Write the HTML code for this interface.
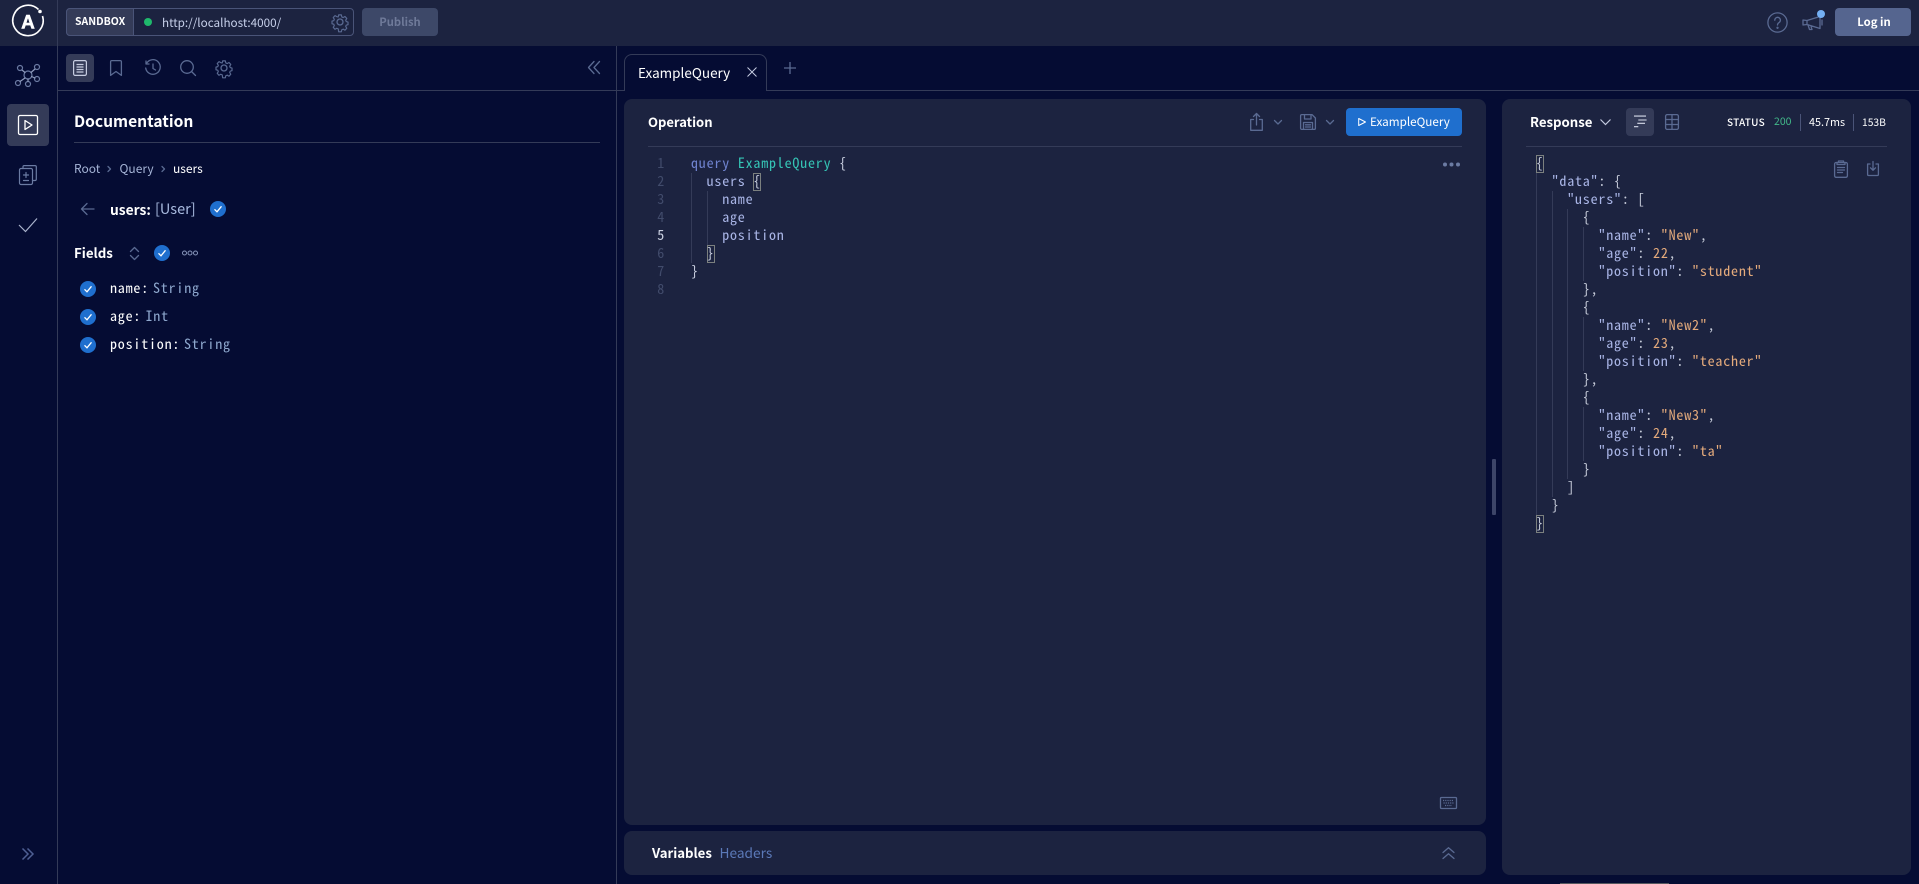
<!DOCTYPE html>
<html><head><meta charset="utf-8"><title>Apollo Sandbox</title>
<style>
*{box-sizing:border-box;margin:0;padding:0}
html,body{width:1919px;height:884px;overflow:hidden;background:#050c33}
body{position:relative;font-family:"Noto Sans CJK JP","Liberation Sans",sans-serif;color:#fff}
.a{position:absolute}
.t{position:absolute;white-space:nowrap;line-height:20px;height:20px}
.m{font-family:"Noto Sans Mono CJK JP","Liberation Mono","DejaVu Sans Mono",monospace;font-size:14px;letter-spacing:.8px;line-height:18px;height:18px;white-space:pre;position:absolute;margin-top:-1px}
svg{position:absolute;overflow:visible;fill:none}
.ln{color:#414b6b;width:20px;text-align:right}
.p{color:#a9b5e6}.k{color:#6f83cf}.c{color:#35c4b5}.w{color:#c9cfe0}.s{color:#e5ab7c}.g{color:#c6cbd9}
.gd{position:absolute;width:1px;background:#343b58}
.bm{position:absolute;width:8px;height:18px;border:1px solid #7b807f}
.chk circle{fill:#1f6fce}.chk path{stroke:#fff;stroke-width:1.3}
.ic{stroke:#5a6a92;stroke-width:1.3;stroke-linecap:round;stroke-linejoin:round}
.ib{stroke:#6b7ba3;stroke-width:1.2;stroke-linecap:round;stroke-linejoin:round}
</style></head><body>
<!-- top bar -->
<div class="a" style="left:0;top:0;width:1919px;height:46px;background:#1c2340"></div>
<div class="a" style="left:57px;top:0;width:1px;height:884px;background:#343b58"></div>
<div class="a" style="left:616px;top:46px;width:1px;height:838px;background:#343b58"></div>
<svg style="left:0;top:0" width="56" height="46"><path d="M38.5 9.5A15.2 15.2 0 1 0 42.5 16" stroke="#fff" stroke-width="1.6"/><circle cx="40" cy="11.5" r="1.8" fill="#fff"/><text x="28" y="28.5" text-anchor="middle" font-family="Liberation Sans,sans-serif" font-size="19" font-weight="700" fill="#fff" stroke="#fff" stroke-width=".5">A</text></svg>
<div class="a" style="left:66px;top:8px;width:288px;height:28px;border:1px solid #4a5478;border-radius:4px"></div>
<div class="a" style="left:66px;top:8px;width:68px;height:28px;background:#343b58;border:1px solid #4a5478;border-radius:4px 0 0 4px"></div>
<div class="t" style="left:75px;top:12px;font-size:10.5px;font-weight:700">SANDBOX</div>
<div class="a" style="left:144px;top:18px;width:8px;height:8px;border-radius:50%;background:#1fb96c"></div>
<div class="t" style="left:162px;top:13px;font-size:11.7px;color:#c7d0ea">http://localhost:4000/</div>
<svg style="left:331px;top:13px" width="18" height="18" viewBox="0 0 18 18" class="ic"><path d="M7.5 1h3l.5 2.3 1.6.7 2-1.2 2 2.2-1.2 2 .6 1.5 2 .5v3l-2 .5-.6 1.5 1.2 2-2 2.2-2-1.2-1.6.7-.5 2.3h-3L7 16.7l-1.6-.7-2 1.2-2-2.2 1.2-2-.6-1.500-2-.5v-3l2-.5.6-1.500-1.200-2 2-2.200 2 1.200L7 3.300z" transform="translate(1 1) scale(.89)"/><circle cx="9" cy="9" r="3"/></svg>
<div class="a" style="left:362px;top:8px;width:76px;height:28px;background:#3d4868;border-radius:4px"></div>
<div class="t" style="left:362px;top:12px;width:76px;text-align:center;font-size:11.2px;font-weight:600;color:#6f7a99">Publish</div>
<svg style="left:1767px;top:12px" width="21" height="21" viewBox="0 0 21 21" class="ic"><circle cx="10.500" cy="10.500" r="9.600"/><path d="M7.800 8.200a2.800 2.800 0 1 1 4.300 2.300c-1 .7-1.600 1.200-1.600 2.500"/><circle cx="10.500" cy="15.800" r=".5"/></svg>
<svg style="left:1802px;top:10px" width="24" height="22" viewBox="0 0 24 22" class="ic"><path d="M1 10v5l4-.5 13 4V6.500L5 10.500zM5 10.500v4M6 15l1.500 4.500h2.500L8.800 15.700M20 10v5"/></svg>
<div class="a" style="left:1817px;top:10px;width:8px;height:8px;border-radius:50%;background:#74b0f4"></div>
<div class="a" style="left:1835px;top:8px;width:76px;height:28px;background:#55658f;border-radius:4px"></div>
<div class="t" style="left:1836px;top:12px;width:76px;text-align:center;font-size:11.3px;font-weight:700">Log in</div>

<!-- sidebar -->
<svg style="left:14px;top:62px" width="28" height="26" viewBox="0 0 28 26" class="ib" stroke="#8f9bbd"><circle cx="14" cy="13" r="4"/><circle cx="6" cy="6" r="2.500"/><circle cx="23" cy="5" r="2.500"/><circle cx="4" cy="21" r="2.500"/><circle cx="14" cy="22" r="2.500"/><circle cx="23" cy="17" r="2.500"/><path d="M8 8l3 2.500M21 7l-4 3.500M6 19.500l5-3.500M14 17v2.500M21 16l-3.500-1.500" stroke="#8f9bbd"/></svg>
<div class="a" style="left:7px;top:104px;width:42px;height:42px;background:#343b58;border-radius:4px"></div>
<svg style="left:18px;top:115px" width="20" height="20" viewBox="0 0 20 20" stroke="#fff" stroke-width="1.300" stroke-linejoin="round"><rect x=".5" y=".5" width="19" height="19" rx="1.500"/><path d="M7 5.500v9l7-4.500z"/></svg>
<svg style="left:19px;top:165px" width="18" height="20" viewBox="0 0 18 20" class="ib" stroke="#9aa5c4"><rect x=".5" y="3.500" width="13" height="16" rx="1.500"/><path d="M4 3.500V1.800c0-.7.500-1.200 1.200-1.200h10.800c.7 0 1.300.5 1.300 1.200v12.500c0 .7-.6 1.200-1.300 1.200h-2.500M7 7.500v5M4.500 10h5M4.500 15.500h5"/></svg>
<svg style="left:18px;top:218px" width="20" height="14" viewBox="0 0 20 14" stroke="#aab3cc" stroke-width="1.200"><path d="M1 7l6.500 6.500L19 .5"/></svg>
<svg style="left:22px;top:848px" width="12" height="12" viewBox="0 0 12 12" stroke="#4e5f93" stroke-width="1.500"><path d="M.5.500L6 6 .5 11.500M5.500.500L11 6l-5.500 5.500"/></svg>

<!-- docs toolbar -->
<div class="a" style="left:66px;top:54px;width:28px;height:28px;background:#343b58;border-radius:4px"></div>
<svg style="left:73px;top:60px" width="14" height="16" viewBox="0 0 14 16" stroke="#c6cce0" stroke-width="1.200"><rect x=".6" y=".6" width="12.800" height="14.800" rx="1.500"/><path d="M3.500 4.500h7M3.500 7h7M3.500 9.500h7M3.500 12h7"/></svg>
<svg style="left:110px;top:60px" width="12" height="16" viewBox="0 0 12 16" class="ic"><path d="M.6 1.800C.6 1.100 1.100.6 1.800.6h8.400c.7 0 1.200.5 1.200 1.200V15.400L6 11.500.6 15.400z"/></svg>
<svg style="left:145px;top:60px" width="16" height="16" viewBox="0 0 16 16" class="ic"><path d="M1.500 3.500A7.300 7.300 0 1 1 .7 8M8 4v4.500l2.500 1.500M1 1v3h3"/></svg>
<svg style="left:180px;top:60px" width="16" height="16" viewBox="0 0 16 16" class="ic"><circle cx="7" cy="7" r="6.300"/><path d="M11.500 11.500L15.500 15.500"/></svg>
<svg style="left:215px;top:59px" width="18" height="18" viewBox="0 0 18 18" class="ic"><path d="M7.500 1h3l.5 2.300 1.600.7 2-1.200 2 2.200-1.200 2 .6 1.500 2 .5v3l-2 .5-.6 1.500 1.200 2-2 2.200-2-1.200-1.600.7-.5 2.300h-3L7 16.700l-1.600-.7-2 1.200-2-2.200 1.200-2-.6-1.500-2-.5v-3l2-.5.6-1.500-1.200-2 2-2.200 2 1.200L7 3.300z" transform="translate(1 1) scale(.89)"/><circle cx="9" cy="9" r="3"/></svg>
<svg style="left:588px;top:61px" width="12" height="13" viewBox="0 0 12 13" class="ic"><path d="M6 .5L.5 6.500 6 12.500M11.500.5L6 6.500l5.500 6"/></svg>
<div class="a" style="left:58px;top:90px;width:558px;height:1px;background:#343b58"></div>

<!-- documentation -->
<div class="t" style="left:74px;top:111px;font-size:15.600px;font-weight:600">Documentation</div>
<div class="a" style="left:74px;top:142px;width:526px;height:1px;background:#343b58"></div>
<div class="t" style="left:74px;top:159px;font-size:12px;color:#a5b4d6">Root</div>
<svg style="left:107px;top:166px" width="4" height="6" viewBox="0 0 4 6" class="ic" stroke-width="1"><path d="M1 .5L3.500 3 1 5.500"/></svg>
<div class="t" style="left:119.500px;top:159px;font-size:12px;color:#a5b4d6">Query</div>
<svg style="left:161px;top:166px" width="4" height="6" viewBox="0 0 4 6" class="ic" stroke-width="1"><path d="M1 .5L3.500 3 1 5.500"/></svg>
<div class="t" style="left:173px;top:159px;font-size:12px;color:#fff">users</div>
<svg style="left:81px;top:203px" width="13" height="12" viewBox="0 0 13 12" class="ic"><path d="M6 .5L.5 6 6 11.500M.5 6H13"/></svg>
<div class="t" style="left:110px;top:199px;font-size:13.800px;font-weight:600">users:</div>
<div class="t" style="left:155px;top:199px;font-size:14.500px;color:#a9bbe0">[User]</div>
<svg class="chk" style="left:210px;top:201px" width="16" height="16"><circle cx="8" cy="8" r="8"/><path d="M4.500 8.300l2.500 2.500 4.500-5.500"/></svg>
<div class="t" style="left:74px;top:243px;font-size:13.300px;font-weight:600">Fields</div>
<svg style="left:130px;top:247px" width="9" height="13" viewBox="0 0 9 13" class="ic"><path d="M.5 4.500L4.500.5l4 4M.5 8.500l4 4 4-4"/></svg>
<svg class="chk" style="left:154px;top:245px" width="16" height="16"><circle cx="8" cy="8" r="8"/><path d="M4.500 8.300l2.500 2.500 4.500-5.500"/></svg>
<svg style="left:182px;top:250px" width="16" height="6" viewBox="0 0 16 6" stroke="#8795ba" stroke-width="1"><circle cx="2.500" cy="3" r="2"/><circle cx="8" cy="3" r="2"/><circle cx="13.500" cy="3" r="2"/></svg>
<svg class="chk" style="left:80px;top:281px" width="16" height="16"><circle cx="8" cy="8" r="8"/><path d="M4.500 8.300l2.500 2.500 4.500-5.500"/></svg>
<svg class="chk" style="left:80px;top:309px" width="16" height="16"><circle cx="8" cy="8" r="8"/><path d="M4.500 8.300l2.500 2.500 4.500-5.500"/></svg>
<svg class="chk" style="left:80px;top:337px" width="16" height="16"><circle cx="8" cy="8" r="8"/><path d="M4.500 8.300l2.500 2.500 4.500-5.500"/></svg>
<div class="m" style="left:110px;top:280px;color:#fff">name:</div><div class="m" style="left:153px;top:280px;color:#8fa9cf">String</div>
<div class="m" style="left:110px;top:308px;color:#fff">age:</div><div class="m" style="left:145.500px;top:308px;color:#8fa9cf">Int</div>
<div class="m" style="left:110px;top:336px;color:#fff">position:</div><div class="m" style="left:184px;top:336px;color:#8fa9cf">String</div>

<!-- tabs -->
<div class="a" style="left:616px;top:90px;width:1303px;height:1px;background:#343b58"></div>
<div class="a" style="left:624px;top:54px;width:143px;height:37px;background:#050c33;border:1px solid #343b58;border-bottom:0;border-radius:8px 8px 0 0"></div>
<div class="t" style="left:638px;top:62px;font-size:13.500px">ExampleQuery</div>
<svg style="left:747px;top:67px" width="10" height="10" viewBox="0 0 10 10" stroke="#c4cbe0" stroke-width="1"><path d="M.5.500l9 9M9.500.500l-9 9"/></svg>
<svg style="left:784px;top:62px" width="12" height="12" viewBox="0 0 12 12" stroke="#5a6a92" stroke-width="1.300"><path d="M6 0v12M0 6h12"/></svg>

<!-- operation panel -->
<div class="a" style="left:624px;top:99px;width:862px;height:726px;background:#1c2340;border-radius:8px"></div>
<div class="t" style="left:648px;top:112px;font-size:13px;font-weight:600">Operation</div>
<svg style="left:1250px;top:113px" width="13" height="18" viewBox="0 0 13 18" class="ic"><path d="M3.500 6.500H.7v10.800h11.600V6.500H9.500M6.500 12V.8M3.500 3.500l3-3 3 3"/></svg>
<svg style="left:1274px;top:120px" width="8" height="5" viewBox="0 0 8 5" class="ic"><path d="M.5.500l3.500 3.500L7.500.500"/></svg>
<svg style="left:1300px;top:114px" width="16" height="16" viewBox="0 0 16 16" class="ic"><path d="M.6 1.800C.6 1.100 1.100.6 1.800.6h10.200l3.400 3.400v10.200c0 .7-.5 1.200-1.200 1.200H1.800c-.7 0-1.200-.5-1.200-1.200zM4.500.6v4.400h6.500V.6M3.500 15.400V8.500h9v6.900M5.500 10.800h5M5.500 13h5"/></svg>
<svg style="left:1326px;top:120px" width="8" height="5" viewBox="0 0 8 5" class="ic"><path d="M.5.500l3.500 3.500L7.500.500"/></svg>
<div class="a" style="left:1346px;top:108px;width:116px;height:28px;background:#1f6fce;border-radius:4px"></div>
<svg style="left:1358px;top:118px" width="8" height="8" viewBox="0 0 8 8" stroke="#fff" stroke-width="1" stroke-linejoin="round"><path d="M.7.500v7L7.500 4z"/></svg>
<div class="t" style="left:1370px;top:112px;font-size:11.700px">ExampleQuery</div>
<div class="a" style="left:648px;top:146px;width:814px;height:1px;background:#343b58"></div>
<svg style="left:1442px;top:162px" width="18" height="5"><circle cx="3" cy="2.500" r="2" fill="#6b7ba3"/><circle cx="9.500" cy="2.500" r="2" fill="#6b7ba3"/><circle cx="16" cy="2.500" r="2" fill="#6b7ba3"/></svg>

<div class="m ln" style="left:645px;top:155px">1</div>
<div class="m ln" style="left:645px;top:173px">2</div>
<div class="m ln" style="left:645px;top:191px">3</div>
<div class="m ln" style="left:645px;top:209px">4</div>
<div class="m ln" style="left:645px;top:227px;color:#c9cfe0">5</div>
<div class="m ln" style="left:645px;top:245px">6</div>
<div class="m ln" style="left:645px;top:263px">7</div>
<div class="m ln" style="left:645px;top:281px">8</div>
<div class="gd" style="left:691px;top:173px;height:90px"></div>
<div class="gd" style="left:707px;top:191px;height:54px"></div>
<div class="bm" style="left:753px;top:173px"></div>
<div class="bm" style="left:707px;top:245px"></div>
<div class="m" style="left:691px;top:155px"><span class="k">query</span> <span class="c">ExampleQuery</span> <span class="w">{</span></div>
<div class="m" style="left:691px;top:173px"><span class="p">  users</span> <span class="w">{</span></div>
<div class="m p" style="left:691px;top:191px">    name</div>
<div class="m p" style="left:691px;top:209px">    age</div>
<div class="m p" style="left:691px;top:227px">    position</div>
<div class="m w" style="left:691px;top:245px">  }</div>
<div class="m w" style="left:691px;top:263px">}</div>
<svg style="left:1440px;top:797px" width="17" height="12" viewBox="0 0 17 12" class="ic" stroke-width="1"><rect x=".5" y=".5" width="16" height="11" rx="1"/><path d="M3 3.500h11M3.500 6h10M5 8.500h7" stroke-dasharray="1.200 1" stroke-linecap="butt"/></svg>

<!-- variables -->
<div class="a" style="left:624px;top:831px;width:862px;height:44px;background:#1c2340;border-radius:8px"></div>
<div class="t" style="left:652px;top:843px;font-size:13.200px;font-weight:600">Variables</div>
<div class="t" style="left:719.500px;top:842px;font-size:13.700px;color:#5b79b8">Headers</div>
<svg style="left:1442px;top:847px" width="13" height="12" viewBox="0 0 13 12" class="ic"><path d="M1 5.500L6.500.7l5.500 4.800M1 11.500L6.500 6.700l5.500 4.800"/></svg>

<div class="a" style="left:1492px;top:459px;width:4px;height:56px;background:#3d4568;border-radius:1px"></div>

<!-- response panel -->
<div class="a" style="left:1502px;top:99px;width:409px;height:776px;background:#1c2340;border-radius:8px"></div>
<div class="t" style="left:1530px;top:112px;font-size:13.200px;font-weight:600">Response</div>
<svg style="left:1600px;top:119px" width="11" height="7" viewBox="0 0 11 7" stroke="#c4cbe0" stroke-width="1.200"><path d="M.5.500l5 5 5-5"/></svg>
<div class="a" style="left:1626px;top:108px;width:28px;height:28px;background:#343b58;border-radius:4px"></div>
<svg style="left:1633px;top:115px" width="14" height="14" viewBox="0 0 14 14" stroke="#d7dcea" stroke-width="1.100"><path d="M1 1.100h12M5.300 5h8.300M4.300 8.300H12M1 11.700h4.300"/></svg>
<svg style="left:1665px;top:114px" width="14" height="16" viewBox="0 0 14 16" class="ic"><rect x=".6" y=".6" width="12.800" height="14.800" rx="1.500"/><path d="M.6 5.500h12.800M.6 10.500h12.800M7 .6v14.800"/></svg>
<div class="t" style="left:1727px;top:112px;font-size:10px;font-weight:500;letter-spacing:.25px">STATUS</div>
<div class="t" style="left:1774px;top:112px;font-size:10.500px;color:#42b98a">200</div>
<div class="a" style="left:1800px;top:114px;width:1px;height:17px;background:#4a5478"></div>
<div class="t" style="left:1809px;top:112px;font-size:10.800px">45.7ms</div>
<div class="a" style="left:1853px;top:114px;width:1px;height:17px;background:#4a5478"></div>
<div class="t" style="left:1862px;top:112px;font-size:10.300px">153B</div>
<div class="a" style="left:1526px;top:146px;width:361px;height:1px;background:#343b58"></div>
<svg style="left:1834px;top:160px" width="14" height="18" viewBox="0 0 14 18" class="ic"><rect x=".6" y="2.500" width="12.800" height="14.800" rx="1.500"/><path d="M4.500 2.500V1h5v1.500h1.500V4.500H3V2.500zM3.500 7.500h7M3.500 10h7M3.500 12.500h5"/></svg>
<svg style="left:1867px;top:161px" width="12" height="15" viewBox="0 0 12 15" class="ic"><path d="M3 3H.6v10.500c0 .6.500 1 1 1h8.800c.6 0 1-.4 1-1V3H9M6 .5v8.500M3.500 6.800L6 9.300l2.500-2.500"/></svg>

<div class="gd" style="left:1536px;top:173px;height:342px"></div>
<div class="gd" style="left:1552px;top:191px;height:306px"></div>
<div class="gd" style="left:1567px;top:209px;height:270px"></div>
<div class="gd" style="left:1583px;top:227px;height:54px"></div>
<div class="gd" style="left:1583px;top:317px;height:54px"></div>
<div class="gd" style="left:1583px;top:407px;height:54px"></div>
<div class="bm" style="left:1536px;top:155px"></div>
<div class="bm" style="left:1536px;top:515px"></div>
<div class="m g" style="left:1536px;top:155px">{</div>
<div class="m" style="left:1536px;top:173px">  <span class="p">"data"</span><span class="g">: {</span></div>
<div class="m" style="left:1536px;top:191px">    <span class="p">"users"</span><span class="g">: [</span></div>
<div class="m g" style="left:1536px;top:209px">      {</div>
<div class="m" style="left:1536px;top:227px">        <span class="p">"name"</span><span class="g">: </span><span class="s">"New"</span><span class="g">,</span></div>
<div class="m" style="left:1536px;top:245px">        <span class="p">"age"</span><span class="g">: </span><span class="s">22</span><span class="g">,</span></div>
<div class="m" style="left:1536px;top:263px">        <span class="p">"position"</span><span class="g">: </span><span class="s">"student"</span></div>
<div class="m g" style="left:1536px;top:281px">      },</div>
<div class="m g" style="left:1536px;top:299px">      {</div>
<div class="m" style="left:1536px;top:317px">        <span class="p">"name"</span><span class="g">: </span><span class="s">"New2"</span><span class="g">,</span></div>
<div class="m" style="left:1536px;top:335px">        <span class="p">"age"</span><span class="g">: </span><span class="s">23</span><span class="g">,</span></div>
<div class="m" style="left:1536px;top:353px">        <span class="p">"position"</span><span class="g">: </span><span class="s">"teacher"</span></div>
<div class="m g" style="left:1536px;top:371px">      },</div>
<div class="m g" style="left:1536px;top:389px">      {</div>
<div class="m" style="left:1536px;top:407px">        <span class="p">"name"</span><span class="g">: </span><span class="s">"New3"</span><span class="g">,</span></div>
<div class="m" style="left:1536px;top:425px">        <span class="p">"age"</span><span class="g">: </span><span class="s">24</span><span class="g">,</span></div>
<div class="m" style="left:1536px;top:443px">        <span class="p">"position"</span><span class="g">: </span><span class="s">"ta"</span></div>
<div class="m g" style="left:1536px;top:461px">      }</div>
<div class="m g" style="left:1536px;top:479px">    ]</div>
<div class="m g" style="left:1536px;top:497px">  }</div>
<div class="m g" style="left:1536px;top:515px">}</div>
<div class="a" style="left:1560px;top:883px;width:109px;height:1px;background:#55585f"></div>
</body></html>
